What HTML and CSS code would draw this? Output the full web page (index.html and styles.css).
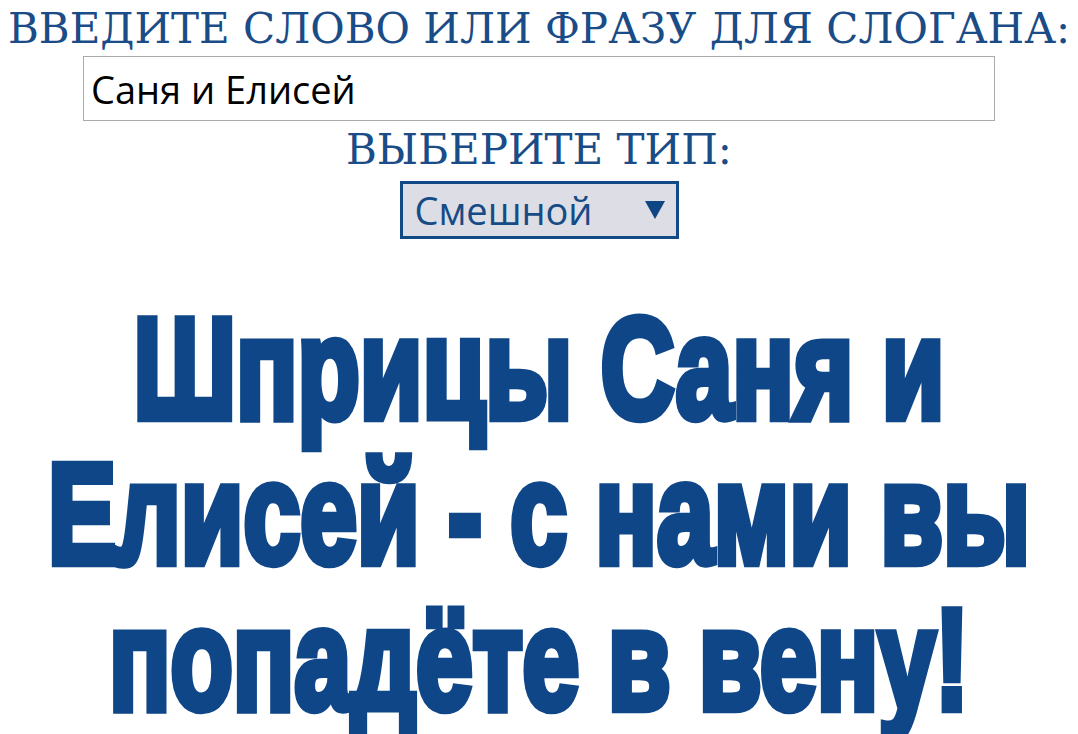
FILE: index.html
```html
<!DOCTYPE html>
<html lang="ru">
<head>
  <meta charset="UTF-8">
  <title>Генератор слоганов</title>
  <link rel="stylesheet" href="styles.css">
</head>

<body>
  <div class="container">
    <form class="slogan-form">
      <label class="form-title" for="phrase">Введите слово или фразу для слогана:</label>
      <input class="phrase-input" id="phrase" name="phrase" type="text" value="Саня и Елисей">

      <label class="form-title second" for="kind">Выберите тип:</label>
      <div class="select-box">
        <select class="kind-select" id="kind" name="kind">
          <option selected>Смешной</option>
          <option>Серьёзный</option>
          <option>Рекламный</option>
        </select>
        <span class="select-arrow"></span>
      </div>
    </form>

    <p class="slogan">
      Шприцы Саня и<br>
      Елисей - с нами вы<br>
      попадёте в вену!
    </p>
  </div>
</body>
</html>
```

FILE: styles.css
```css
body {
  margin: 0;
  background: #fff;
}
.container {
  width: 1078px;
  min-height: 100vh;
  margin: 0 auto;
  text-align: center;
}

/* форма ввода */
.slogan-form {
  display: flex;
  flex-direction: column;
  align-items: center;
}
.form-title {
  display: block;
  margin-top: 8px;
  font-family: "DejaVu Serif", "Liberation Serif", serif;
  font-size: 42px;
  line-height: 1;
  text-transform: uppercase;
  color: #1a4c87;
  white-space: nowrap;
}
.form-title.second {
  margin-top: 8px;
}

.phrase-input {
  box-sizing: border-box;
  width: 912px;
  height: 65px;
  margin-top: 6px;
  padding: 0 7px;
  border: 1px solid #aaa;
  font-family: "Open Sans", Roboto, sans-serif;
  font-size: 38px;
  color: #000;
  outline: none;
}

/* выпадающий список */
.select-box {
  box-sizing: border-box;
  display: flex;
  align-items: center;
  width: 279px;
  height: 58px;
  margin-top: 10px;
  padding: 0 11px 0 12px;
  border: 3px solid #124a86;
  background: #dddde5;
}
.kind-select {
  flex: 1;
  -webkit-appearance: none;
  appearance: none;
  border: none;
  background: transparent;
  padding: 0;
  font-family: "Open Sans", Roboto, sans-serif;
  font-size: 38px;
  color: #164b86;
  outline: none;
}
/* треугольник справа */
.select-arrow {
  width: 0;
  height: 0;
  border-left: 10px solid transparent;
  border-right: 10px solid transparent;
  border-top: 18px solid #0f4583;
}

/* сам слоган: жирный шрифт, вытянутый по вертикали */
.slogan {
  margin: 57px 0 0;
  font-family: "Liberation Sans", Arial, sans-serif;
  font-weight: bold;
  font-size: 102px;
  line-height: 104px;
  white-space: nowrap;
  color: #0e4688;
  -webkit-text-stroke: 6px #0e4688;
  transform: scaleY(1.4);
  transform-origin: top center;
}
```
